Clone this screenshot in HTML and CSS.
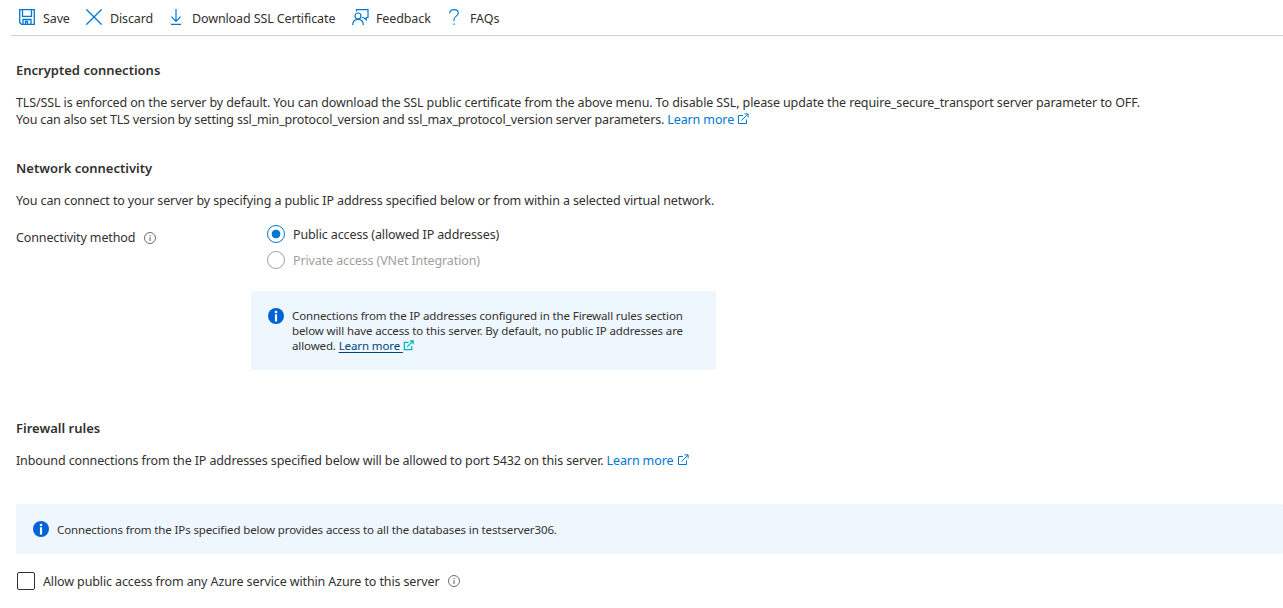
FILE: index.html
```html
<!DOCTYPE html>
<html lang="en">
<head>
<meta charset="utf-8">
<title>Networking</title>
<link rel="stylesheet" href="styles.css">
</head>
<body>
<svg class="defs" width="0" height="0">
  <symbol id="external" viewBox="0 0 12 12"><path d="M6 2.5H1.5V10.5H9.5V6.5M4.5 7.5L11 1M7.5 .9H11.1V4.5" fill="none" stroke="currentColor"/></symbol>
  <symbol id="info" viewBox="0 0 12 12"><circle cx="6" cy="6" r="5.5" fill="none" stroke="currentColor" stroke-width=".9"/><path d="M6 5.1V9M6 3V4.2" stroke="currentColor" stroke-width="1"/></symbol>
  <symbol id="info-solid" viewBox="0 0 16 16"><circle cx="8" cy="8" r="8" fill="#0062d6"/><circle cx="8" cy="4" r="1.3" fill="#fff"/><path d="M8 6.3V13.5" stroke="#fff" stroke-width="2.2"/></symbol>
</svg>
<nav class="toolbar">
  <button class="command save"><svg width="16" height="16" viewBox="0 0 16 16"><path d="M.7.7H15.3V15.3H2.5L.7 13.5ZM3.5.7V7.3H12.5V.7M4 15V10.5H12V15M6.5 15V12.5H8.5V15" fill="none" stroke="currentColor" stroke-width="1.3"/></svg><span>Save</span></button>
  <button class="command discard"><svg width="16" height="16" viewBox="0 0 16 16"><path d="M.4.4L15.6 15.6M15.6.4L.4 15.6" stroke="currentColor" stroke-width="1.3"/></svg><span>Discard</span></button>
  <button class="command download"><svg width="12" height="16" viewBox="0 0 12 16"><path d="M6 0V12.2M1.4 7.7L6 12.3L10.6 7.7M1 15.4H11" fill="none" stroke="currentColor" stroke-width="1.2"/></svg><span>Download SSL Certificate</span></button>
  <button class="command feedback"><svg width="17" height="16" viewBox="0 0 17 16"><path d="M4.5 2.6V.6H16V8.5H14.2V11L11.4 8.5H10.2" fill="none" stroke="currentColor" stroke-width="1.2"/><circle cx="6" cy="7" r="3" fill="none" stroke="currentColor" stroke-width="1.2"/><path d="M.7 16C.8 12.6 3 10.3 6 10.3S11.2 12.6 11.3 16" fill="none" stroke="currentColor" stroke-width="1.2"/></svg><span>Feedback</span></button>
  <button class="command faqs"><svg width="10" height="16" viewBox="0 0 10 16"><path d="M.7 4.6C.7 2 2.5.6 5 .6S9.3 2.1 9.3 4.1C9.3 7.1 5 7.6 5 10.3V12.3M5 14.6V16" fill="none" stroke="currentColor" stroke-width="1.1"/></svg><span>FAQs</span></button>
</nav>
<main class="content">
  <section class="encrypted">
    <h2>Encrypted connections</h2>
    <p><span>TLS/SSL is enforced on the server by default. You can download the SSL public certificate from the above menu. To disable SSL, please update the require_secure_transport server parameter to OFF.</span><br><span class="line-version">You can also set TLS version by setting ssl_min_protocol_version and ssl_max_protocol_version server parameters.</span> <a class="link">Learn more <svg width="12" height="12"><use href="#external"/></svg></a></p>
  </section>
  <section class="network">
    <h2>Network connectivity</h2>
    <p>You can connect to your server by specifying a public IP address specified below or from within a selected virtual network.</p>
    <div class="field">
      <div class="label"><span>Connectivity method</span><svg width="12" height="12"><use href="#info"/></svg></div>
      <div class="options">
        <label class="option selected"><i class="radio"></i><span>Public access (allowed IP addresses)</span></label>
        <label class="option disabled"><i class="radio"></i><span>Private access (VNet Integration)</span></label>
      </div>
    </div>
    <div class="notice notice-access">
      <svg width="16" height="16"><use href="#info-solid"/></svg>
      <p>Connections from the IP addresses configured in the Firewall rules section<br>below will have access to this server. By default, no public IP addresses are<br>allowed. <a class="notice-link"><u>Learn more </u><svg width="11" height="11"><use href="#external"/></svg></a></p>
    </div>
  </section>
  <section class="firewall">
    <h2>Firewall rules</h2>
    <p><span>Inbound connections from the IP addresses specified below will be allowed to port 5432 on this server.</span> <a class="link">Learn more <svg width="12" height="12"><use href="#external"/></svg></a></p>
    <div class="notice notice-wide">
      <svg width="16" height="16"><use href="#info-solid"/></svg>
      <p>Connections from the IPs specified below provides access to all the databases in testserver306.</p>
    </div>
    <label class="check"><i class="box"></i><span>Allow public access from any Azure service within Azure to this server</span><svg width="12" height="12"><use href="#info"/></svg></label>
  </section>
</main>
</body>
</html>
```
FILE: styles.css
```css
* { box-sizing: border-box; }
body { margin: 0; height: 608px; overflow: hidden; background: #fff; color: #323130; font: 12.5px/17px "Noto Sans", "Open Sans", sans-serif; letter-spacing: -0.12px; white-space: nowrap; }
.defs { display: block; height: 0; }
h2, p { margin: 0; }
h2 { font-size: 13px; line-height: 18px; font-weight: 600; letter-spacing: 0; }
svg { flex: none; }
.toolbar { display: flex; align-items: center; height: 36px; margin-left: 11px; padding-left: 8px; border-bottom: 1px solid #d2d0ce; }
.command { display: flex; align-items: center; gap: 8px; padding: 0; border: 0; background: none; color: #323130; font: inherit; letter-spacing: inherit; }
.command svg { color: #0078d4; margin-top: -1px; }
.command span { padding-top: 1px; }
.save { width: 67px; }
.discard { width: 84px; }
.download { width: 182px; gap: 10px; }
.feedback { width: 97px; gap: 7px; }
.faqs { gap: 11px; }
.content { padding: 25px 0 0 16px; }
.content section > p { margin-top: 15px; }
.line-version { letter-spacing: -0.17px; }
.network { margin-top: 31px; }
.link { color: #0078d4; }
.link svg { vertical-align: -1px; }
.field { display: flex; margin-top: 16px; }
.label { display: flex; align-items: center; gap: 9px; width: 251px; height: 24px; }
.label svg, .check svg { color: #605e5c; }
.label svg { margin-top: 1px; }
.options { display: flex; flex-direction: column; gap: 8px; }
.option { display: flex; align-items: center; gap: 8px; height: 18px; }
.radio { width: 18px; height: 18px; border: 1px solid #a19f9d; border-radius: 50%; }
.selected .radio { border-color: #0078d4; background: radial-gradient(circle, #0078d4 4px, transparent 4.7px); }
.disabled { color: #a19f9d; }
.notice { display: flex; gap: 8px; background: #eef6fe; border-radius: 2px; font-size: 11.5px; line-height: 15px; letter-spacing: -0.12px; }
.notice-access { width: 465px; height: 79px; margin: 22px 0 0 235px; padding: 17px; }
.notice-link { color: #004578; }
.notice-link u { text-underline-offset: 2px; white-space: pre; }
.notice-link svg { color: #00b7c3; stroke-width: 1.4; vertical-align: -1px; }
.firewall { margin-top: 49px; }
.notice-wide { height: 50px; margin-top: 35px; padding: 17px; }
.notice-wide p { padding-top: 1px; }
.check { display: flex; align-items: center; gap: 8px; margin-top: 18px; padding-left: 1px; }
.box { width: 18px; height: 18px; border: 1px solid #323130; border-radius: 2px; }
```
